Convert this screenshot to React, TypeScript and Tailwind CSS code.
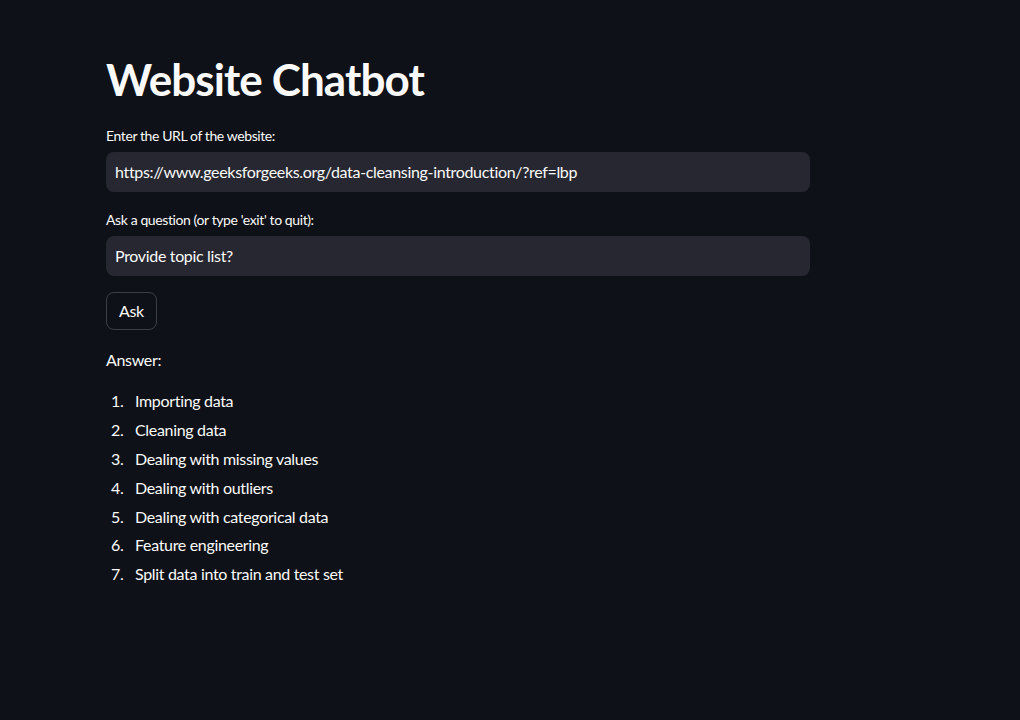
export default function App() {
  const items = [
    "Importing data",
    "Cleaning data",
    "Dealing with missing values",
    "Dealing with outliers",
    "Dealing with categorical data",
    "Feature engineering",
    "Split data into train and test set",
  ];
  return (
    <div
      className="min-h-[720px] w-full bg-[#0e1117] text-[#fafafa]"
      style={{ fontFamily: "Lato, 'Noto Sans', sans-serif" }}
    >
      <div className="ml-[106px] w-[704px] pt-[55px]">
        <h1 className="text-[44px] font-bold leading-[48px] tracking-[-0.9px]">Website Chatbot</h1>
        <div className="mt-[24px] text-[14px] leading-[18px] tracking-[-0.4px]">Enter the URL of the website:</div>
        <div className="mt-[7px] flex h-[40px] items-center rounded-[8px] bg-[#262730] px-[9px] text-[16px] tracking-[-0.33px]">
          https://www.geeksforgeeks.org/data-cleansing-introduction/?ref=lbp
        </div>
        <div className="mt-[19px] text-[14px] leading-[18px] tracking-[-0.4px]">Ask a question (or type 'exit' to quit):</div>
        <div className="mt-[7px] flex h-[40px] items-center rounded-[8px] bg-[#262730] px-[9px] text-[16px] tracking-[-0.33px]">
          Provide topic list?
        </div>
        <button className="mt-[16px] flex h-[38px] items-center rounded-[8px] border border-[rgba(250,250,250,0.2)] px-[12px] text-[16px] tracking-[-0.33px]">
          Ask
        </button>
        <div className="mt-[18px] text-[16px] leading-[24px] tracking-[-0.33px]">Answer:</div>
        <ol className="mt-[15px] text-[16px] tracking-[-0.33px]">
          {items.map((t, i) => (
            <li key={i} className="flex h-[28.8px] items-center">
              <span className="ml-[5px] w-[24px]">{i + 1}.</span>
              <span>{t}</span>
            </li>
          ))}
        </ol>
      </div>
    </div>
  );
}
